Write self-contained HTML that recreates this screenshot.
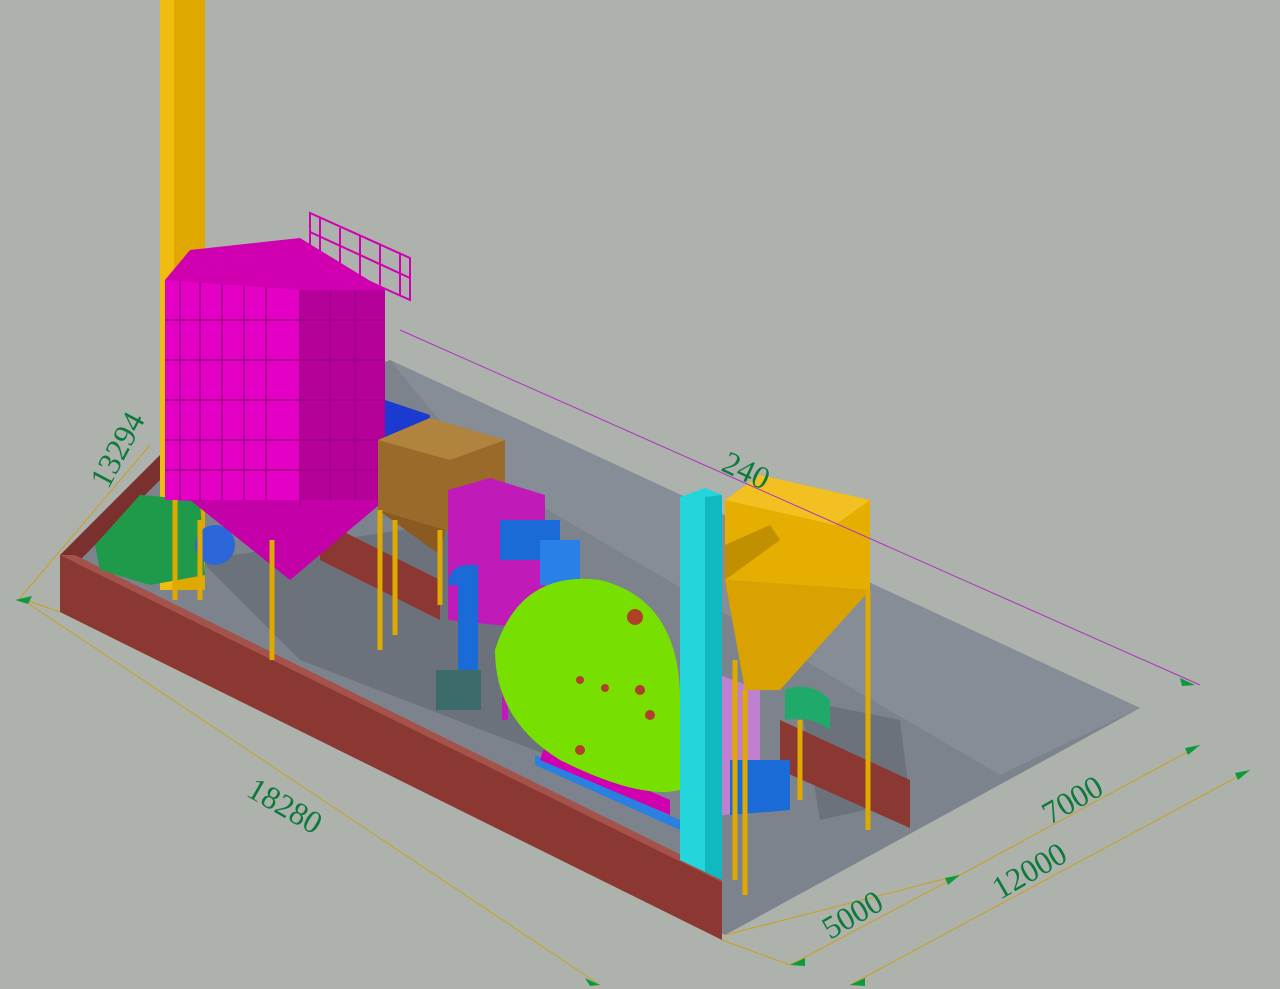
<!DOCTYPE html>
<html><head><meta charset="utf-8"><style>
html,body{margin:0;padding:0;background:#aeb2ad;}
svg{display:block}
text{font-family:"Liberation Serif",serif;fill:#0d7a3c;font-size:32px}
</style></head><body>
<svg width="1280" height="989" viewBox="0 0 1280 989" xmlns="http://www.w3.org/2000/svg">
<rect width="1280" height="989" fill="#aeb2ad"/>
<polygon points="160,455 390,360 1140,708 725,935 60,560" fill="#7c838d"/>
<polygon points="390,360 1140,708 1000,775 480,470" fill="#868d97"/>
<polygon points="200,560 470,520 640,660 560,760 300,660" fill="#626872" opacity="0.6"/>
<polygon points="800,700 900,720 910,800 820,820" fill="#626872" opacity="0.6"/>
<polygon points="60,555 160,455 160,480 75,565" fill="#7a302c"/>
<polygon points="60,555 722,882 722,940 60,612" fill="#8b3833"/>
<polygon points="60,555 75,555 722,875 722,882" fill="#a4524a"/>
<polygon points="320,520 440,580 440,620 320,560" fill="#8b3833"/>
<polygon points="780,720 910,780 910,828 780,770" fill="#8b3833"/>
<rect x="160" y="0" width="45" height="590" fill="#e0a900"/>
<rect x="160" y="0" width="14" height="590" fill="#f0bc10"/>
<polygon points="95,545 140,495 200,500 205,575 150,585 100,570" fill="#1f9a4a"/>
<circle cx="215" cy="545" r="20" fill="#2b67d8"/>
<polygon points="165,280 190,250 300,238 385,290 385,500 165,500" fill="#d000b0"/>
<polygon points="165,280 300,290 300,505 165,500" fill="#e400c4"/>
<polygon points="300,290 385,290 385,500 300,505" fill="#b5009a"/>
<polygon points="190,500 385,500 290,580" fill="#c400a8"/>
<g stroke="#a0008a" stroke-width="1.5" fill="none">
<path d="M180,280V500M200,282V500M222,284V500M244,286V500M266,288V500M300,290V505M330,292V500M355,292V500"/>
<path d="M165,320H385M165,360H385M165,400H385M165,440H385M165,470H385"/>
</g>
<path d="M310,213 410,258 410,300 310,255Z M320,218V260M340,228V268M360,236V276M380,245V285M400,253V295M310,232 410,278" stroke="#d000b0" stroke-width="2" fill="none"/>
<path d="M175,500V600M272,540V660M200,520V600" stroke="#e0a900" stroke-width="5"/>
<polygon points="385,400 430,415 430,440 385,440" fill="#1a3ad0"/>
<polygon points="378,440 430,418 505,440 505,530 445,530 378,510" fill="#9a6a2a"/>
<polygon points="378,440 430,418 505,440 450,460" fill="#b0843e"/>
<polygon points="378,510 445,530 440,555" fill="#8a5a20"/>
<path d="M380,510V650M395,520V635M440,530V605" stroke="#e0a900" stroke-width="5"/>
<polygon points="448,490 490,478 545,495 545,630 448,620" fill="#c01ab8"/>
<rect x="500" y="520" width="60" height="40" fill="#1a6ad8"/>
<rect x="540" y="540" width="40" height="45" fill="#2980e6"/>
<path d="M458,585 Q458,575 468,575 V680" stroke="#1a6ad8" stroke-width="20" fill="none"/>
<rect x="436" y="670" width="45" height="40" fill="#3b6b6a"/>
<path d="M505,630V720" stroke="#c01ab8" stroke-width="6"/>
<polygon points="535,755 680,820 680,830 535,765" fill="#2a80e0"/>
<polygon points="540,760 670,815 670,800 545,745" fill="#d000b0"/>
<path d="M495,650 Q520,570 600,580 Q680,600 680,700 L680,790 Q640,800 560,760 Q495,720 495,650Z" fill="#78e000"/>
<circle cx="635" cy="617" r="8" fill="#b0402a"/>
<g fill="#b0402a"><circle cx="580" cy="680" r="4"/><circle cx="605" cy="688" r="4"/><circle cx="640" cy="690" r="5"/><circle cx="650" cy="715" r="5"/><circle cx="580" cy="750" r="5"/></g>
<polygon points="680,660 760,690 760,810 690,820" fill="#c080d0"/>
<polygon points="730,760 790,760 790,810 730,815" fill="#1a6ad8"/>
<polygon points="680,497 705,488 722,495 722,880 680,860" fill="#22d6dc"/>
<polygon points="705,497 722,495 722,880 705,872" fill="#10b8c0"/>
<polygon points="725,500 760,475 870,500 870,590 725,580" fill="#e6ae00"/>
<polygon points="725,500 760,475 870,500 835,525" fill="#f2c020"/>
<polygon points="725,545 770,525 780,540 725,580" fill="#c09000"/>
<polygon points="725,580 870,590 780,690 745,690" fill="#d9a200"/>
<path d="M745,690V895M800,720V800M868,590V830M735,660V880" stroke="#e0a900" stroke-width="5"/>
<path d="M785,690 Q810,680 830,700 L830,730 Q810,715 785,720Z" fill="#1faa6a"/>
<g stroke="#c9a020" stroke-width="1" fill="none">
<path d="M20,598 L600,985M60,612 L20,598M722,940 L790,965M790,965 L960,875M850,985 L1250,770M960,875 L1200,745M725,935 L960,875"/>
<path d="M20,598 L150,445"/>
</g>
<path d="M400,330 L1200,685" stroke="#b030c0" stroke-width="1"/>
<g fill="#0d9a3c">
<polygon points="15,600 32,596 28,604"/><polygon points="600,985 585,978 590,986"/>
<polygon points="1200,745 1185,748 1188,755"/><polygon points="1250,770 1235,773 1238,780"/>
<polygon points="790,965 805,958 805,966"/><polygon points="850,985 865,978 865,986"/>
<polygon points="960,875 945,878 948,885"/><polygon points="1195,685 1180,678 1182,686"/>
</g>
<g font-family="Liberation Serif, serif" font-size="32" fill="#0d7a3c">
<text transform="translate(245,795) rotate(30)">18280</text>
<text transform="translate(108,490) rotate(-62)">13294</text>
<text transform="translate(720,470) rotate(25)">240</text>
<text transform="translate(1050,825) rotate(-30)">7000</text>
<text transform="translate(1000,900) rotate(-30)">12000</text>
<text transform="translate(830,940) rotate(-30)">5000</text>
</g>
</svg>
</body></html>
